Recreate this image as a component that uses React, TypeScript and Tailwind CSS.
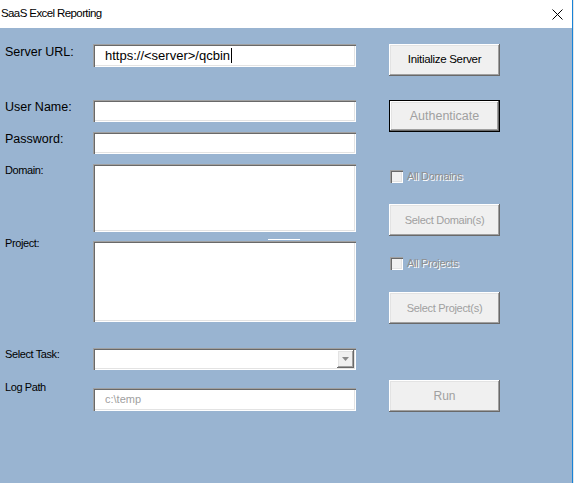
import React from 'react';

const sunken =
  'bg-white shadow-[inset_1px_1px_0_#a0a0a0,inset_2px_2px_0_#696969,inset_-1px_-1px_0_#ffffff,inset_-2px_-2px_0_#e3e3e3]';
const raised =
  'bg-[#f0f0f0] shadow-[inset_-1px_-1px_0_#696969,inset_1px_1px_0_#ffffff,inset_-2px_-2px_0_#a0a0a0,inset_2px_2px_0_#e3e3e3]';

function Button({ label, disabled, size, focused }: { label: string; disabled?: boolean; size: string; focused?: boolean }) {
  return (
    <div
      className={`h-[32px] w-[111px] flex items-center justify-center ${raised} ${size} ${
        disabled ? 'text-[#a0a0a0]' : 'text-black'
      } ${focused ? 'border border-black' : ''}`}
    >
      {label}
    </div>
  );
}

function CheckRow({ label }: { label: string }) {
  return (
    <div className="flex items-center h-[13px] pl-[1px] gap-[4px]">
      <div className="w-[13px] h-[13px] bg-[#f0f0f0] shadow-[inset_1px_1px_0_#a0a0a0,inset_2px_2px_0_#696969,inset_-1px_-1px_0_#ffffff,inset_-2px_-2px_0_#e3e3e3]" />
      <span className="text-[11px] tracking-[-0.3px] leading-[13px] text-[#8e8e8e] [text-shadow:1px_1px_0_#ffffff]">{label}</span>
    </div>
  );
}

export default function App() {
  return (
    <div className="flex w-[574px] h-[483px] bg-white font-['Liberation_Sans',Arial,sans-serif] overflow-hidden">
      <div className="flex flex-col w-[572px]">
        {/* Title bar */}
        <div className="h-[28px] shrink-0 bg-white flex items-center justify-between pl-[1px] pr-[9px]">
          <span className="text-[11.5px] tracking-[-0.6px] text-black">SaaS Excel Reporting</span>
          <svg width="11" height="11" viewBox="0 0 11 11" className="mt-[1px]">
            <path d="M0.5 0.5 L10.5 10.5 M10.5 0.5 L0.5 10.5" stroke="#000" strokeWidth="1" />
          </svg>
        </div>

        {/* Form body */}
        <div className="flex-1 bg-[#99b4d1] flex pl-[5px] pt-[16px]">
          {/* Left column */}
          <div className="w-[351px] flex flex-col">
            <div className="flex items-start">
              <span className="w-[88px] pt-[1px] text-[12.5px] leading-[15px] text-black">Server URL:</span>
              <div className={`w-[263px] h-[23px] ${sunken} flex items-center pl-[12px] text-[13px] text-black`}>
                https://&lt;server&gt;/qcbin
                <span className="w-[1px] h-[15px] bg-black ml-[1px]" />
              </div>
            </div>

            <div className="flex items-start mt-[33px]">
              <span className="w-[88px] text-[12.5px] leading-[15px] text-black">User Name:</span>
              <div className={`w-[263px] h-[22px] ${sunken}`} />
            </div>

            <div className="flex items-start mt-[10px]">
              <span className="w-[88px] text-[12.5px] leading-[15px] text-black">Password:</span>
              <div className={`w-[263px] h-[22px] ${sunken}`} />
            </div>

            <div className="flex items-start mt-[10px]">
              <span className="w-[88px] text-[11px] tracking-[-0.4px] leading-[13px] text-black">Domain:</span>
              <div className={`w-[263px] h-[68px] ${sunken}`} />
            </div>

            <div className="h-[9px] flex items-end pl-[263px]">
              <div className="w-[32px] h-[1px] bg-white mb-[1px]" />
            </div>

            <div className="flex items-start">
              <span className="w-[88px] -mt-[4px] text-[11px] tracking-[-0.4px] leading-[13px] text-black">Project:</span>
              <div className={`w-[263px] h-[81px] ${sunken}`} />
            </div>

            <div className="flex items-start mt-[26px]">
              <span className="w-[88px] text-[11px] tracking-[-0.4px] leading-[13px] text-black">Select Task:</span>
              <div className={`w-[263px] h-[22px] ${sunken} flex items-center justify-end pr-[2px]`}>
                <div className={`w-[17px] h-[18px] ${raised} flex items-center justify-center`}>
                  <svg width="7" height="4" viewBox="0 0 7 4">
                    <path d="M0 0 H7 L3.5 4 Z" fill="#8a8a8a" />
                  </svg>
                </div>
              </div>
            </div>

            <div className="flex items-start mt-[18px]">
              <span className="w-[88px] -mt-[7px] text-[11px] tracking-[-0.4px] leading-[13px] text-black">Log Path</span>
              <div className={`w-[263px] h-[23px] ${sunken} flex items-center pl-[12px] text-[11px] text-[#a0a0a0]`}>
                c:\temp
              </div>
            </div>
          </div>

          {/* Right column */}
          <div className="ml-[33px] w-[111px] flex flex-col">
            <Button label="Initialize Server" size="text-[11.5px] tracking-[-0.3px]" />
            <div className="mt-[24px]">
              <Button label="Authenticate" size="text-[12.5px]" disabled focused />
            </div>
            <div className="mt-[38px]">
              <CheckRow label="All Domains" />
            </div>
            <div className="mt-[21px]">
              <Button label="Select Domain(s)" size="text-[11px] tracking-[-0.3px]" disabled />
            </div>
            <div className="mt-[21px]">
              <CheckRow label="All Projects" />
            </div>
            <div className="mt-[22px]">
              <Button label="Select Project(s)" size="text-[11px] tracking-[-0.3px]" disabled />
            </div>
            <div className="mt-[56px]">
              <Button label="Run" size="text-[12px]" disabled />
            </div>
          </div>
        </div>
      </div>
      <div className="w-[1px] bg-[#1883d7]" />
      <div className="w-[1px] bg-[#e6e6e6]" />
    </div>
  );
}
